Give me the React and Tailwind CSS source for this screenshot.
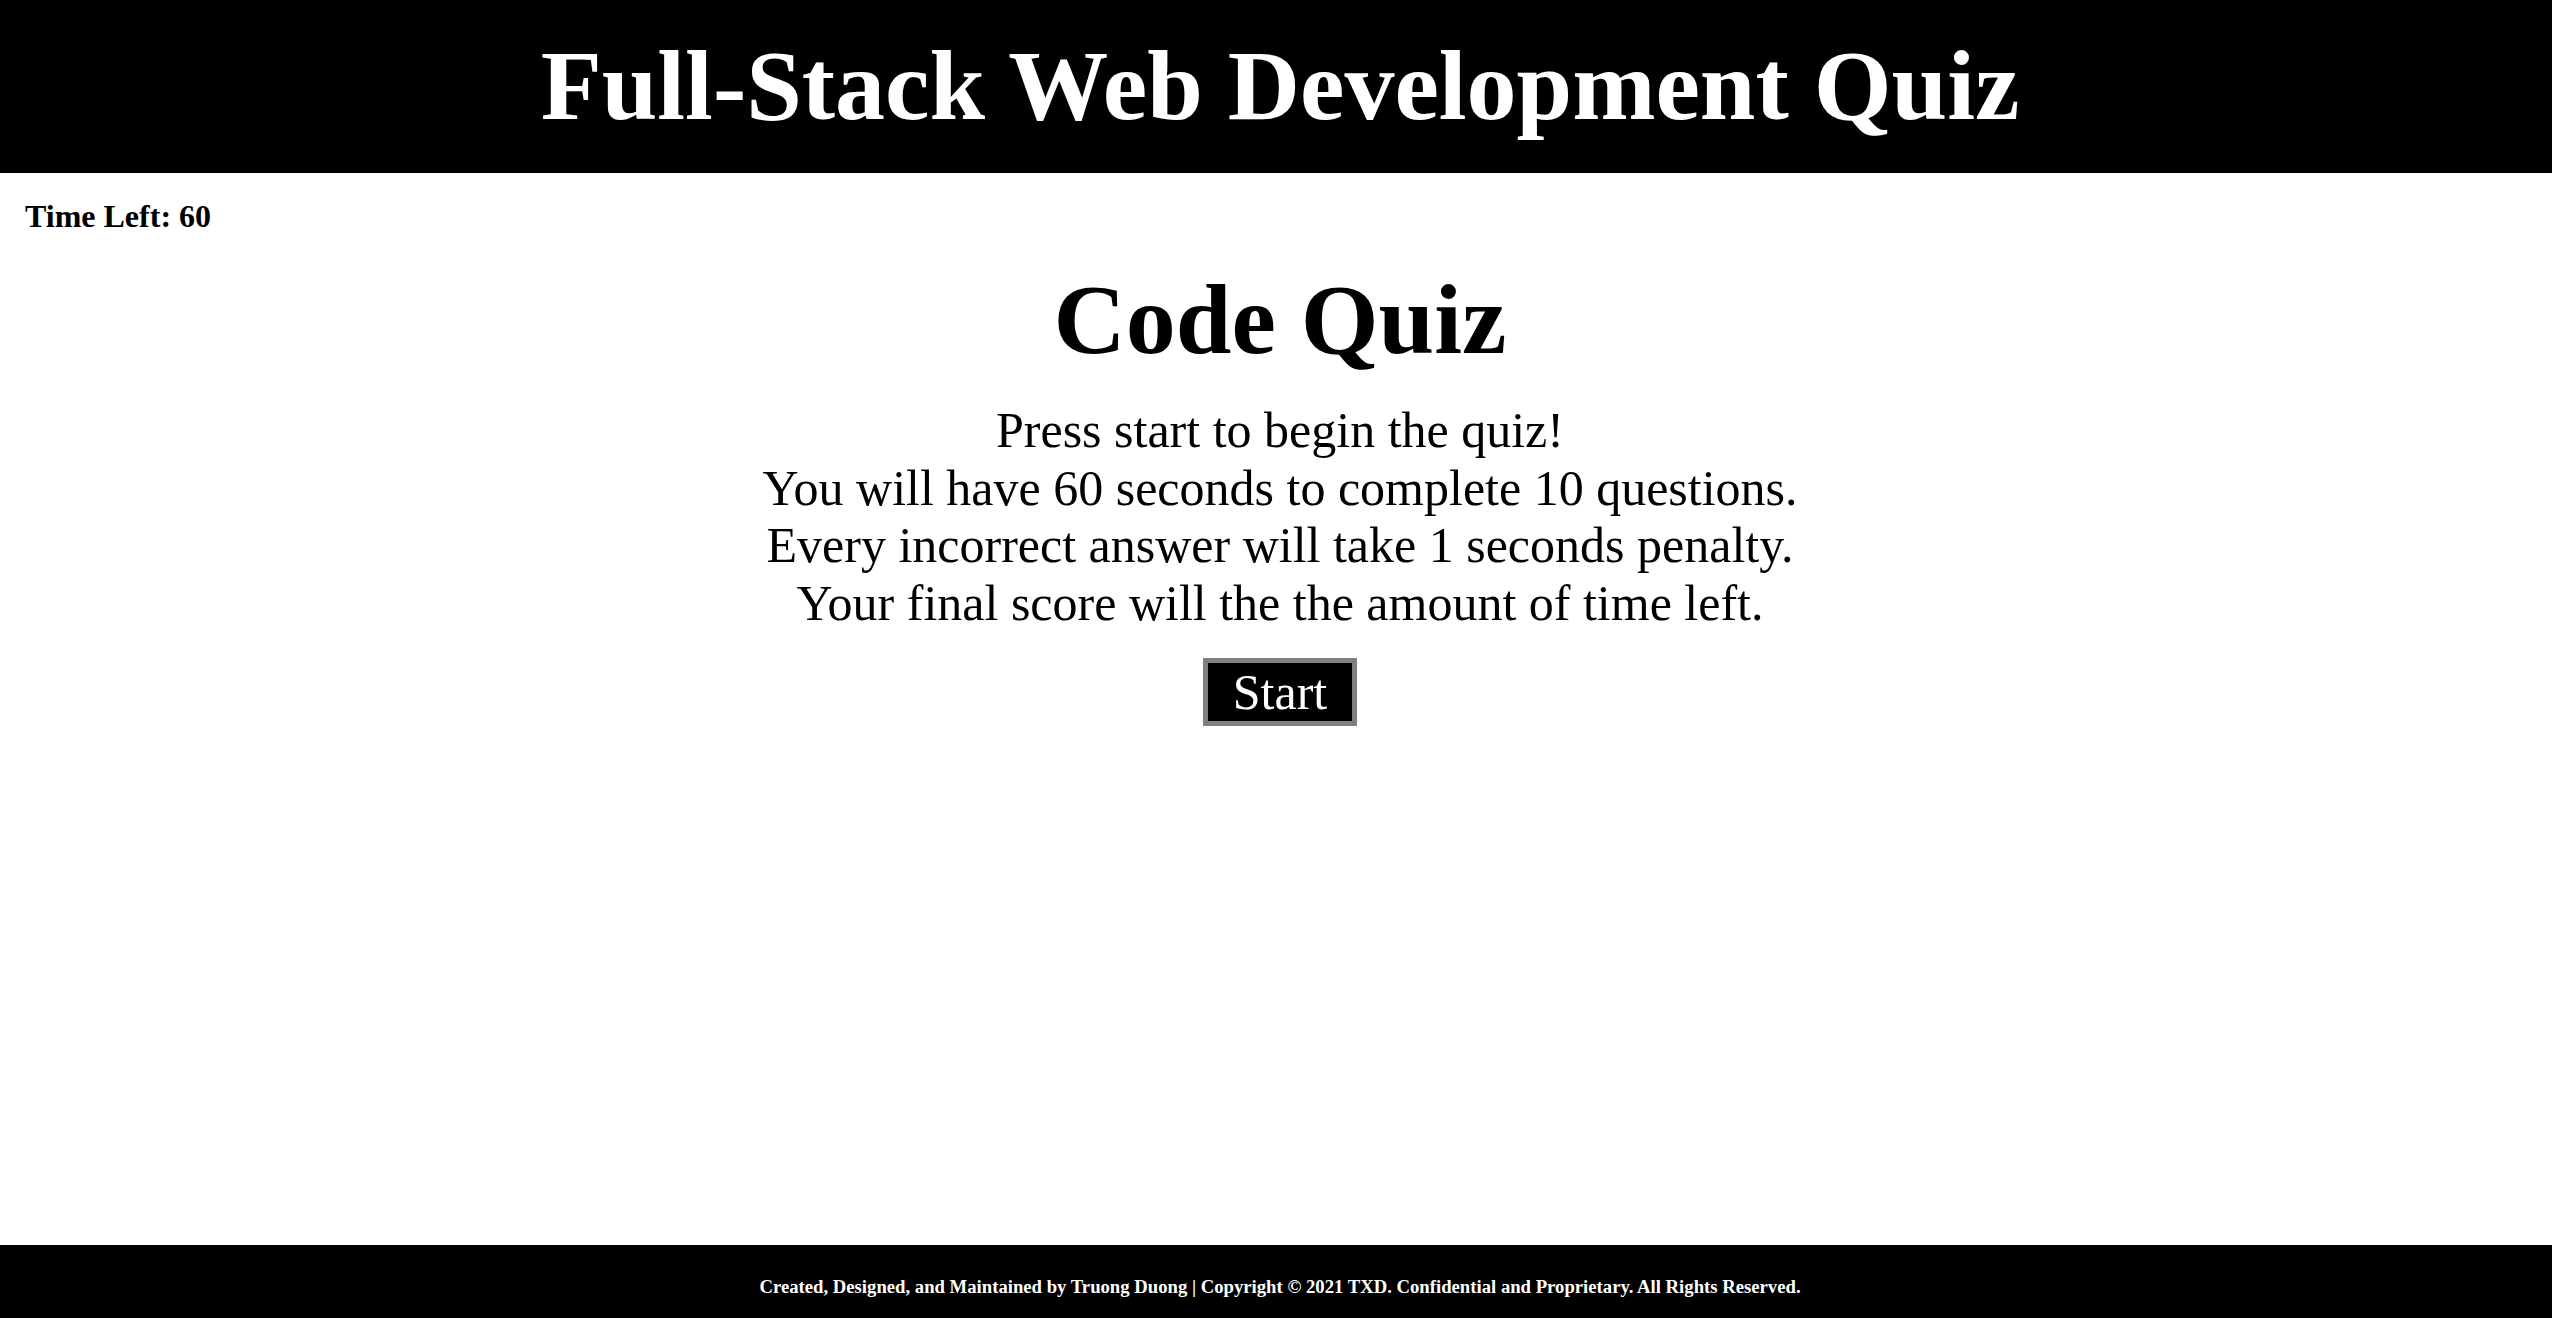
export default function App() {
  return (
    <div className="min-h-screen flex flex-col bg-white text-black font-['Liberation_Serif','Times_New_Roman',serif]">
      <header className="bg-black text-white text-center pt-[28px] pb-[30px] pl-[8px]">
        <h1 className="text-[100px] font-bold leading-[115px]">Full-Stack Web Development Quiz</h1>
      </header>
      <div className="pl-[25px] mt-[25px] text-[32px] font-bold leading-[37px]">Time Left: 60</div>
      <main className="flex flex-col items-center text-center pl-[8px]">
        <h2 className="mt-[27px] text-[100px] font-bold leading-[115px]">Code Quiz</h2>
        <p className="mt-[25px] text-[50px] leading-[57.5px]">
          Press start to begin the quiz!
          <br />
          You will have 60 seconds to complete 10 questions.
          <br />
          Every incorrect answer will take 1 seconds penalty.
          <br />
          Your final score will the the amount of time left.
        </p>
        <button className="mt-[26px] border-[5px] border-[#808080] bg-black text-white text-[50px] leading-[58px] px-[25px]">
          Start
        </button>
      </main>
      <footer className="mt-auto h-[73px] bg-black text-white text-center text-[18.7px] font-bold leading-[21px] pt-[31px] pl-[8px]">
        Created, Designed, and Maintained by Truong Duong | Copyright © 2021 TXD. Confidential and Proprietary. All Rights Reserved.
      </footer>
    </div>
  );
}
